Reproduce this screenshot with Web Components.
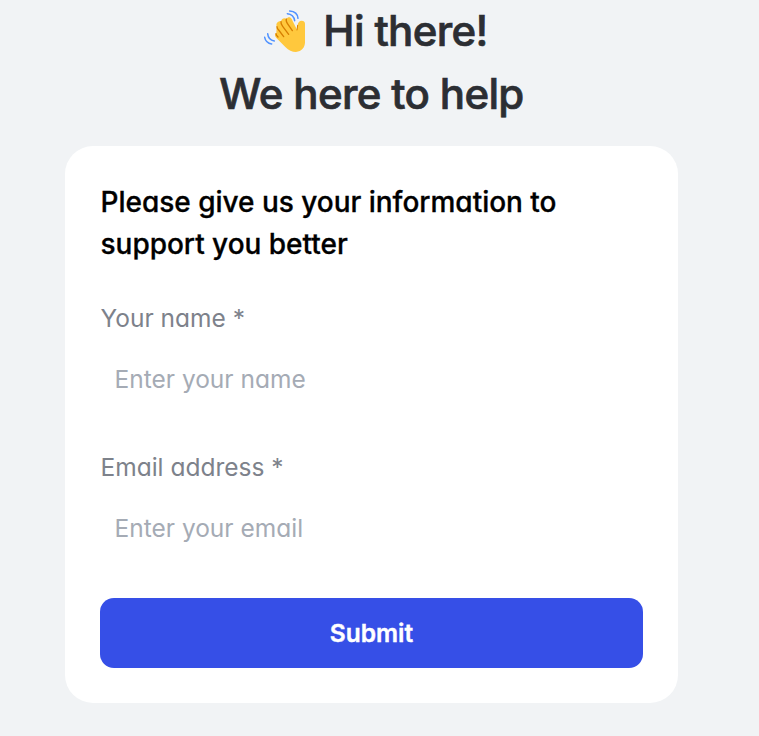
<!DOCTYPE html>
<html lang="en">
<head>
<meta charset="utf-8">
<title>Contact</title>
<style>
  body {
    margin: 0;
    background: #f1f3f5;
    font-family: Inter, "Noto Sans", sans-serif;
    font-feature-settings: "cv11";
    overflow: hidden;
  }
</style>
</head>
<body>
<support-widget>
  <greeting-header slot="header">
    <waving-hand slot="icon"></waving-hand>
    <span slot="hello">Hi there!</span>
    <span slot="message">We here to help</span>
  </greeting-header>
  <info-card>
    <span slot="title">Please give us your information to support you better</span>
    <text-field label="Your name *" placeholder="Enter your name"></text-field>
    <text-field label="Email address *" placeholder="Enter your email" type="email"></text-field>
    <submit-button>Submit</submit-button>
  </info-card>
</support-widget>

<script>
class SupportWidget extends HTMLElement {
  constructor() {
    super();
    this.attachShadow({ mode: "open" });
  }

  connectedCallback() {
    this.shadowRoot.innerHTML = /* html */`
    <style>
      :host {
        display: flex;
        flex-direction: column;
        gap: 21px;
        box-sizing: border-box;
        width: 743px;
        height: 736px;
        margin-top: -1px;
        padding: 0 65px;
      }
    </style>
    <slot name="header"></slot>
    <slot></slot>
    `;
  }
}

class WavingHand extends HTMLElement {
  constructor() {
    super();
    this.attachShadow({ mode: "open" });
  }

  connectedCallback() {
    this.shadowRoot.innerHTML = /* html */`
    <style>
      :host {
        display: block;
        width: 44px;
        height: 46px;
      }

      svg {
        display: block;
      }
    </style>
    <svg width="44" height="46" viewBox="24 24 132 138" fill="none" stroke-linecap="round">
      <path fill="#ffc83d" d="M64 99C58 103 59 109 65 115L91 141C101 151 111 156 123 156C140 155 150 142 150 127V71C150 65 146 62 140 62C133 62 129 67 128 74L126 89L110 57C107 50 98 50 94 57C88 52 80 56 78 64C69 62 62 70 65 78Z"/>
      <path stroke="#d67d00" stroke-width="4" d="M66 80C66 84 68 87 71 90L86 110M78 65C77 70 80 75 83 79L101 103M94 57C92 62 95 67 98 72L112 92M63 101C63 105 66 108 69 111"/>
      <path stroke="#d67d00" stroke-width="3" d="M128 76L126 90"/>
      <path stroke="#5092ff" stroke-width="4.5" d="M97 41C108 42 117 49 119 62M104 33C119 34 128 43 129 55M38 101C39 112 46 121 58 123M29 112C31 122 38 130 50 132"/>
    </svg>
    `;
  }
}

class GreetingHeader extends HTMLElement {
  constructor() {
    super();
    this.attachShadow({ mode: "open" });
  }

  connectedCallback() {
    this.shadowRoot.innerHTML = /* html */`
    <style>
      :host {
        display: block;
        color: #2c2e33;
        font-size: 42px;
        font-weight: 500;
        line-height: 63px;
        letter-spacing: -0.65px;
        -webkit-text-stroke: 0.7px #2c2e33;
      }

      .line {
        display: flex;
        justify-content: center;
        align-items: center;
        gap: 16px;
        height: 63px;
        white-space: nowrap;
      }

      .hello {
        padding-left: 8px;
      }
    </style>
    <div class="line hello"><slot name="icon"></slot><slot name="hello"></slot></div>
    <div class="line"><slot name="message"></slot></div>
    `;
  }
}

class InfoCard extends HTMLElement {
  constructor() {
    super();
    this.attachShadow({ mode: "open" });
  }

  connectedCallback() {
    this.shadowRoot.innerHTML = /* html */`
    <style>
      :host {
        display: flex;
        flex-direction: column;
        gap: 35px;
        padding: 35px;
        border-radius: 28px;
        background: #fff;
      }

      .title {
        margin: 0;
        padding-left: 0.5px;
        color: #000;
        font-size: 28px;
        font-weight: 500;
        line-height: 42px;
        letter-spacing: -0.02px;
        -webkit-text-stroke: 0.3px #000;
      }
    </style>
    <h2 class="title"><slot name="title"></slot></h2>
    <slot></slot>
    `;
  }
}

class TextField extends HTMLElement {
  constructor() {
    super();
    this.attachShadow({ mode: "open" });
  }

  connectedCallback() {
    this.label = this.getAttribute("label") ?? "";
    this.placeholder = this.getAttribute("placeholder") ?? "";
    this.type = this.getAttribute("type") ?? "text";
    this.render();
  }

  render() {
    this.shadowRoot.innerHTML = /* html */`
    <style>
      :host {
        display: block;
        font-size: 24.5px;
      }

      label {
        display: flex;
        flex-direction: column;
        gap: 7px;
        color: #7d828b;
        line-height: 37px;
      }

      span {
        padding-left: 0.5px;
      }

      input {
        box-sizing: border-box;
        width: 100%;
        height: 70px;
        padding: 0 14.5px;
        border: 0;
        border-radius: 14px;
        outline: 0;
        background: transparent;
        color: #000;
        font: inherit;
        font-feature-settings: inherit;
        letter-spacing: inherit;
      }

      input::placeholder {
        color: #a5abb5;
        opacity: 1;
      }
    </style>
    <label>
      <span>${this.label}</span>
      <input type="${this.type}" placeholder="${this.placeholder}">
    </label>
    `;
  }
}

class SubmitButton extends HTMLElement {
  constructor() {
    super();
    this.attachShadow({ mode: "open" });
  }

  connectedCallback() {
    this.shadowRoot.innerHTML = /* html */`
    <style>
      :host {
        display: block;
      }

      button {
        display: block;
        width: 100%;
        height: 70px;
        padding: 0;
        border: 0;
        border-radius: 14px;
        background: #364fe7;
        color: #fff;
        font: 600 24.5px Inter, "Noto Sans", sans-serif;
        -webkit-text-stroke: 0.4px #fff;
      }
    </style>
    <button type="button"><slot></slot></button>
    `;
  }
}

customElements.define("support-widget", SupportWidget);
customElements.define("waving-hand", WavingHand);
customElements.define("greeting-header", GreetingHeader);
customElements.define("info-card", InfoCard);
customElements.define("text-field", TextField);
customElements.define("submit-button", SubmitButton);
</script>
</body>
</html>
